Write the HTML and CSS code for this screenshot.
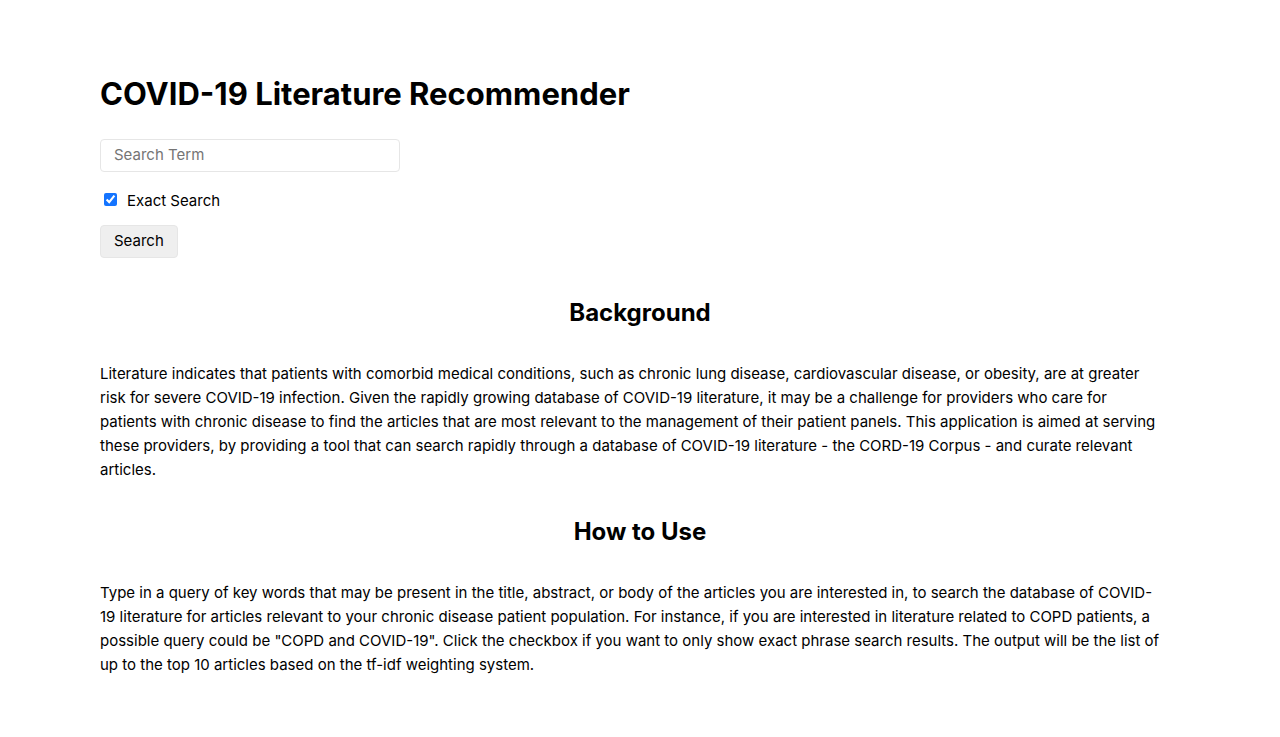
FILE: index.html
```html
<!DOCTYPE html>
<html lang="en">
<head>
<meta charset="utf-8">
<title>COVID-19 Literature Recommender</title>
<link rel="stylesheet" href="styles.css">
</head>
<body>
<main class="page">
  <h1 class="title">COVID-19 Literature Recommender</h1>
  <form class="search-form">
    <input class="field" type="text" placeholder="Search Term" aria-label="Search Term">
    <label class="exact"><input class="tick" type="checkbox" checked>Exact Search</label>
    <button class="submit" type="submit">Search</button>
  </form>
  <section class="section">
    <h2 class="heading">Background</h2>
    <p class="text">Literature indicates that patients with comorbid medical conditions, such as chronic lung disease, cardiovascular disease, or obesity, are at greater risk for severe COVID-19 infection. Given the rapidly growing database of COVID-19 literature, it may be a challenge for providers who care for patients with chronic disease to find the articles that are most relevant to the management of their patient panels. This application is aimed at serving these providers, by providing a tool that can search rapidly through a database of COVID-19 literature - the CORD-19 Corpus - and curate relevant articles.</p>
  </section>
  <section class="section">
    <h2 class="heading">How to Use</h2>
    <p class="text">Type in a query of key words that may be present in the title, abstract, or body of the articles you are interested in, to search the database of COVID-19 literature for articles relevant to your chronic disease patient population. For instance, if you are interested in literature related to COPD patients, a possible query could be "COPD and COVID-19". Click the checkbox if you want to only show exact phrase search results. The output will be the list of up to the top 10 articles based on the tf-idf weighting system.</p>
  </section>
</main>
</body>
</html>
```

FILE: styles.css
```css
* {
  box-sizing: border-box;
}

body {
  margin: 0;
  background: #fff;
  color: #000;
  font-family: Inter, "Liberation Sans", sans-serif;
  font-size: 15px;
  line-height: 24px;
}

.page {
  padding: 70px 100px 60px;
}

.title {
  margin: 0 0 21px;
  font-size: 31px;
  line-height: 48px;
  font-weight: 700;
}

.search-form {
  display: flex;
  flex-direction: column;
  align-items: flex-start;
  margin-bottom: 37px;
}

.field {
  width: 300px;
  height: 33px;
  padding: 0 13px 2px;
  border: 1px solid #e6e6e6;
  border-radius: 4px;
  background: #fff;
  color: #000;
  font: inherit;
}

.field::placeholder {
  color: #757575;
}

.exact {
  display: flex;
  align-items: center;
  gap: 10px;
  margin: 17px 0 12px;
  padding-left: 4px;
}

.tick {
  width: 13px;
  height: 13px;
  margin: 0 0 3px;
  accent-color: #1474ff;
}

.submit {
  height: 33px;
  padding: 0 13px 2px;
  border: 1px solid #e6e6e6;
  border-radius: 4px;
  background: #efefef;
  color: #000;
  font: inherit;
}

.section + .section {
  margin-top: 32px;
}

.heading {
  margin: 0 0 31px;
  font-size: 24px;
  line-height: 36px;
  font-weight: 700;
  text-align: center;
}

.text {
  margin: 0;
  padding-right: 20px;
}
```
